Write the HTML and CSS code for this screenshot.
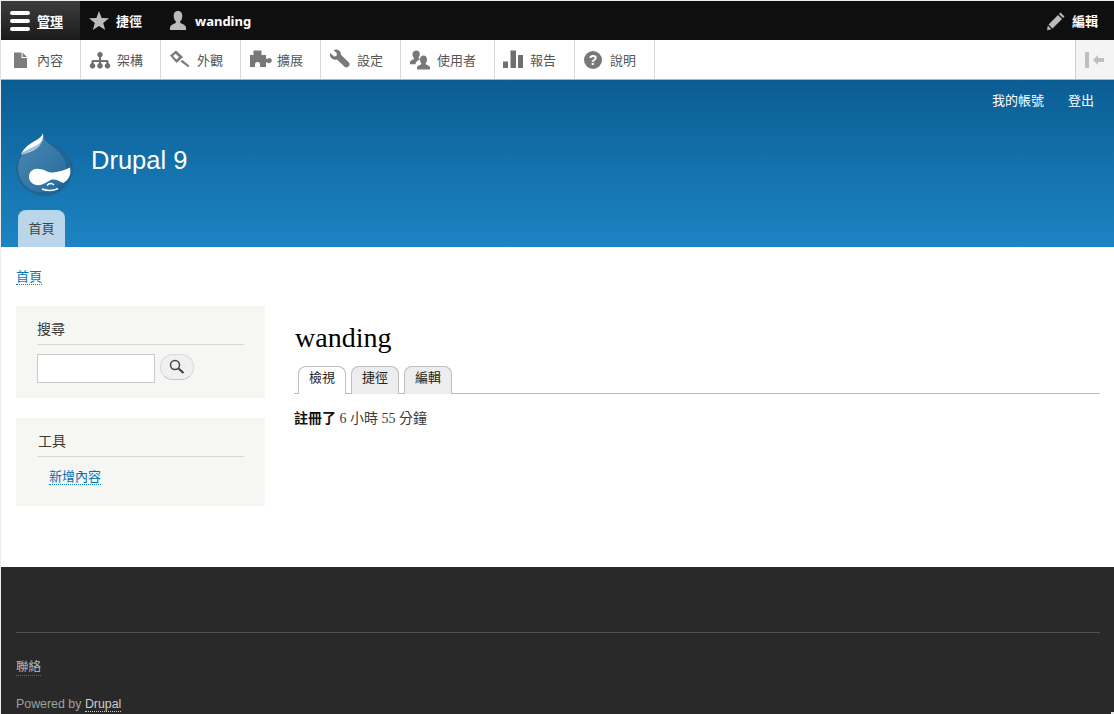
FILE: index.html
```html
<!DOCTYPE html>
<html lang="zh-Hant">
<head>
<meta charset="utf-8">
<title>wanding | Drupal 9</title>
<link rel="stylesheet" href="styles.css">
</head>
<body>
<div class="page">
  <nav class="bar">
    <a class="bar-item bar-item-active"><svg class="bar-icon bar-icon-menu" width="22" height="20" viewBox="0 0 22 20"><rect x="0" y="0" width="20" height="4" rx="2" fill="#fff"/><rect x="0" y="8" width="20" height="4" rx="2" fill="#fff"/><rect x="0" y="16" width="20" height="4" rx="2" fill="#fff"/></svg><span class="under">管理</span></a>
    <a class="bar-item"><svg class="bar-icon bar-icon-star" width="20" height="20" viewBox="0 0 20 20"><path fill="#bbb" d="M10 0l2.6 6.9 7.4.4-5.8 4.6 2 7.1L10 15l-6.200 4 2-7.100L0 7.300l7.400-.4z"/></svg><span>捷徑</span></a>
    <a class="bar-item bar-item-user"><svg class="bar-icon" width="20" height="20" viewBox="0 0 20 20"><path fill="#bbb" d="M10 0c3 0 4.300 2.300 4.300 5 0 2.400-1 4.300-2 5.300-.4.700-.2 1.500.5 1.900 2.500 1.100 5.200 2.300 5.200 4.300V19H2v-2.500c0-2 2.700-3.200 5.200-4.300.7-.4.900-1.200.5-1.900-1-1-2-2.900-2-5.300C5.700 2.300 7 0 10 0z"/></svg><span class="latin">wanding</span></a>
    <a class="bar-item bar-item-edit"><svg class="bar-icon" width="20" height="20" viewBox="0 0 20 20"><path fill="#bbb" d="M14.500 1.500l4 4L17 7l-4-4zM12 4l4 4-9.500 9.500-4-4zM1.800 14.600l3.600 3.600-4.400 1z"/></svg><span>編輯</span></a>
  </nav>

  <nav class="tray">
    <a class="tray-item"><svg class="tray-icon" width="20" height="20" viewBox="0 0 20 20"><path fill="#7d7d7d" d="M4 2.500h7.500V8H17v10H4zM12.500 2.500L17 7h-4.500z"/></svg><span>內容</span></a>
    <a class="tray-item"><svg class="tray-icon" width="20" height="20" viewBox="0 0 20 20"><path fill="#6f6f6f" d="M10 2a2.700 2.700 0 0 1 1.100 5.200V10h6a1.500 1.500 0 0 1 1.500 1.500v1.800a2.800 2.800 0 1 1-2.200 0V12h-5.300v1.300a2.800 2.800 0 1 1-2.200 0V12H3.600v1.300a2.800 2.800 0 1 1-2.200 0v-1.800A1.500 1.500 0 0 1 2.900 10h6V7.200A2.700 2.700 0 0 1 10 2z"/></svg><span>架構</span></a>
    <a class="tray-item"><svg class="tray-icon" width="20" height="20" viewBox="0 0 20 20"><path fill="#7a7a7a" d="M6 .5L13 7l-6.500 6L0 5.500zM5.500 3.800L3 6l3.500 3.500L9 7zM10.500 11.500l1.700-1.700 7.300 6-1.300 1.500z"/></svg><span>外觀</span></a>
    <a class="tray-item"><svg class="tray-icon" width="20" height="20" viewBox="0 0 20 20"><path fill="#787878" d="M0 5h3.500V.5h8V5H16v3.800h1.500a2.500 2.500 0 1 1 0 3.600H16V17h-6v-2.500a2.500 2.500 0 0 0-5 0V17H0z"/></svg><span>擴展</span></a>
    <a class="tray-item"><svg class="tray-icon" width="20" height="20" viewBox="0 0 20 20"><path fill="#787878" d="M6 -.5c2.900 0 5.200 2.400 4.900 5.300l8 7.600c1 1 .9 2.700 0 3.700l-.6.700c-1 1-2.700 1-3.700 0L7 9.600C4 10.400 0 8.400 0 5c0-.7.100-1.300.4-1.900l3.600 3.500 2.400-.6.600-2.400L3.500 0C4.300-.3 5.200-.5 6-.5z"/></svg><span>設定</span></a>
    <a class="tray-item tray-item-wide"><svg class="tray-icon" width="20" height="20" viewBox="0 0 20 20"><path fill="#787878" d="M6.500 0.500c2 0 3.300 1.500 3.300 3.500 0 1.500-.6 2.800-1.500 3.800 1 .4 1.500 .9 1.700 1.400-1.500.8-4.500 2.300-4.500 5H0v-2c0-1.500 2-2.300 3.500-3 .5-.3.600-1 .3-1.500-.8-1-1.300-2.200-1.300-3.700C2.500 2 4.500 0.500 6.500 0.500zM13.500 5.500c2 0 3.500 1.500 3.500 4 0 1.500-.5 2.800-1.300 3.700-.3.500-.2 1.100.3 1.400 1.700.7 4 1.600 4 3v2H7v-2c0-1.400 2.300-2.300 4-3 .5-.3.600-.9.300-1.400C10.500 12.300 10 11 10 9.500c0-2.500 1.500-4 3.500-4z"/></svg><span>使用者</span></a>
    <a class="tray-item tray-item-tight"><svg class="tray-icon" width="20" height="20" viewBox="0 0 20 20"><path fill="#6f6f6f" d="M0 11.500h5V18H0zM7.500 .5h5.500V18H7.500zM15 5h5v13h-5z"/></svg><span>報告</span></a>
    <a class="tray-item tray-item-tight"><svg class="tray-icon" width="20" height="20" viewBox="0 0 20 20"><circle cx="10" cy="10" r="9" fill="#787878"/><text x="10" y="15" class="help-glyph">?</text></svg><span>說明</span></a>
    <div class="tray-spacer"></div>
    <a class="tray-toggle"><svg width="20" height="16" viewBox="0 0 20 16"><rect x="0" y="0" width="4" height="16" fill="#bfbfbf"/><path fill="#bfbfbf" d="M8 8l5-5v3h6v4h-6v3z"/></svg></a>
  </nav>

  <header class="site-header">
    <ul class="secondary-menu">
      <li><a>我的帳號</a></li>
      <li><a>登出</a></li>
    </ul>
    <div class="branding">
      <svg class="logo" width="60" height="68" viewBox="0 0 60 68">
        <defs>
          <linearGradient id="drop" x1="0" y1="0" x2="1" y2="1">
            <stop offset="0" stop-color="#4c88b2"/>
            <stop offset="1" stop-color="#246a9c"/>
          </linearGradient>
        </defs>
        <path fill="#1f6596" d="M28 1C29 8 36 11 43 15 52 21 58 29 58 37 58 53 45 65 30 65 14 65 1 53 1 37 1 27 8 19 15 14 21 10 27 7 28 1z"/>
        <path fill="url(#drop)" d="M28 6C30 11 38 15 44 21 51 28 53 36 50 44 46 56 34 62 22 61 10 58 3 48 3 37 3 27 9 21 16 16 21 13 26 11 28 6z"/>
        <path fill="#fff" d="M28 2C29 8 27 12 21 15 15 18 9 20 6 24 8 18 13 14 18 11 23 8 27 6 28 2z"/>
        <path fill="#a9c6dc" d="M27 10C25 13 21 15 15 18 11 20 8 22 6 24 9 23 13 22 18 20 23 17 26 14 27 10z"/>
        <path fill="#fff" d="M14 46C14 40 19 37 24 38 29 38 33 42 38 41.500 44 41 50 39 55 36.500 56.500 43 54 49 48 52 44 50 41 48 37 48.500 33 49.500 31 53 25 54 19 55 14 51 14 46z"/>
        <path fill="none" stroke="#fff" stroke-width="1.500" d="M27 58c5 2 11 2 16-.5M32 54.500c2-2.500 5-2.500 7-.5"/>
      </svg>
      <a class="site-name">Drupal 9</a>
    </div>
    <ul class="main-menu">
      <li><a class="main-tab">首頁</a></li>
    </ul>
  </header>

  <main class="main">
    <div class="breadcrumb"><a class="link">首頁</a></div>
    <div class="columns">
      <aside class="sidebar">
        <section class="block">
          <h2 class="block-title">搜尋</h2>
          <form class="search">
            <input class="search-input" type="text">
            <button class="search-btn" type="button"><svg width="16" height="16" viewBox="0 0 16 16"><circle cx="6" cy="6" r="4.500" fill="none" stroke="#444" stroke-width="1.500"/><path d="M9.500 9.500l5 4.500" stroke="#444" stroke-width="2.200"/></svg></button>
          </form>
        </section>
        <section class="block block-tools">
          <h2 class="block-title block-title-tools">工具</h2>
          <ul class="block-list"><li><a class="link link-dark">新增內容</a></li></ul>
        </section>
      </aside>
      <article class="content">
        <h1 class="title">wanding</h1>
        <ul class="tabs">
          <li><a class="tab tab-active">檢視</a></li>
          <li><a class="tab">捷徑</a></li>
          <li><a class="tab">編輯</a></li>
        </ul>
        <p class="member"><strong>註冊了</strong> 6 小時 55 分鐘</p>
      </article>
    </div>
  </main>

  <footer class="footer">
    <div class="footer-inner">
      <a class="footer-link">聯絡</a>
      <p class="powered">Powered by <a class="footer-drupal">Drupal</a></p>
    </div>
  </footer>
</div>
<div class="corner"></div>
</body>
</html>
```
FILE: styles.css
```css
* { box-sizing: border-box; }
html, body { margin: 0; padding: 0; height: 100%; background: #ededed; }
body { font-family: "Liberation Sans", "Noto Sans CJK TC", sans-serif; font-size: 14px; overflow: hidden; }
ul { list-style: none; margin: 0; padding: 0; }
.page { margin: 1px 0 0 1px; height: 713px; display: flex; flex-direction: column; background: #fff; }

.bar { height: 39px; background: #0f0f0f; display: flex; align-items: stretch; flex: none; color: #fff; font-family: "Noto Sans", "Noto Sans CJK TC", sans-serif; font-weight: 700; font-size: 13px; }
.bar-item { display: flex; align-items: center; padding: 0 14px 0 9px; color: #fff; }
.bar-icon { margin-right: 6px; flex: none; }
.bar-icon-menu { margin-right: 5px; }
.bar-icon-star { margin-right: 7px; }
.bar-item-active { width: 79px; background: linear-gradient(#3d3d3d, #1b1b1b); padding-right: 0; }
.bar-item-user { padding-left: 12px; }
.bar-item-user .bar-icon { margin-right: 7px; }
.bar-item-edit { margin-left: auto; padding: 0 16px 0 0; }
.under { text-decoration: underline; text-underline-offset: 2px; }
.latin { letter-spacing: 0; }

.tray { height: 40px; flex: none; background: #fff; display: flex; align-items: stretch; border-bottom: 1px solid #b5b5b5; box-shadow: 0 1px 1px rgba(0,0,0,.3); position: relative; font-family: "Noto Sans", "Noto Sans CJK TC", sans-serif; font-size: 13px; color: #565656; }
.tray-item { width: 80px; display: flex; align-items: center; padding-left: 9px; border-right: 1px solid #d9d9d9; flex: none; }
.tray-item-wide { width: 94px; }
.tray-item-tight { padding-left: 8px; }
.tray-icon { margin-right: 7px; flex: none; overflow: visible; }
.help-glyph { fill: #fff; font: 700 14px "Liberation Sans", sans-serif; text-anchor: middle; }
.tray-spacer { flex: 1; }
.tray-toggle { width: 39px; background: #f4f4f4; border-left: 1px solid #cfcfcf; display: flex; align-items: center; justify-content: center; }

.site-header { height: 167px; flex: none; background: linear-gradient(#0a5d93, #1d84c3); display: flex; flex-direction: column; position: relative; color: #fff; }
.secondary-menu { display: flex; justify-content: flex-end; gap: 24px; padding: 12px 20px 0 0; font-size: 13px; line-height: 17px; color: #fff; }
.branding { display: flex; align-items: center; padding: 10px 0 0 14px; height: 101px; flex: none; }
.logo { flex: none; }
.site-name { font-size: 25.5px; margin-left: 16px; margin-top: -8px; color: #fff; }
.main-menu { display: flex; padding: 0 0 0 17px; }
.main-tab { display: block; width: 47px; height: 37px; background: #b9d6ea; border-radius: 8px 8px 0 0; color: #444; font-size: 13px; line-height: 37px; text-align: center; }

.main { flex: 1; display: flex; flex-direction: column; padding: 22px 14px 0 15px; }
.link { color: #0678be; border-bottom: 1px dotted #0678be; }
.link-dark { color: #0071b3; }
.breadcrumb { line-height: 16px; font-size: 13px; height: 37px; }
.columns { display: flex; flex: 1; align-items: flex-start; }
.sidebar { width: 249px; flex: none; display: flex; flex-direction: column; gap: 20px; }
.block { background: #f6f6f2; padding: 13px 21px 0; height: 92px; }
.block-tools { height: 88px; }
.block-title { margin: 0; font-weight: 400; font-size: 14px; line-height: 20px; color: #3b3b3b; padding-bottom: 5px; border-bottom: 1px solid #d6d6d6; }
.block-title-tools { padding-left: 1px; }
.search { display: flex; align-items: flex-start; gap: 5px; margin-top: 9px; }
.search-input { width: 118px; height: 29px; border: 1px solid #c9c9c9; background: #fff; padding: 0; margin: 0; }
.search-btn { width: 34px; height: 26px; border: 1px solid #d8d8d8; border-bottom-color: #c4c4c4; border-radius: 13px; background: #f0f0f0; padding: 0; display: flex; align-items: center; justify-content: center; }
.block-list { padding: 12px 0 0 12px; line-height: 16px; font-size: 13px; }

.content { flex: 1; padding: 15px 0 0 29px; min-width: 0; }
.title { margin: 0 0 0 1px; font: 400 28px/34px "Liberation Serif", "Noto Serif CJK TC", serif; color: #000; }
.tabs { display: flex; gap: 5px; margin-top: 11px; padding-left: 4px; border-bottom: 1px solid #bbb; height: 28px; }
.tab { display: block; height: 28px; padding: 0 10px; background: #ededed; border: 1px solid #bfbfbf; border-bottom: 0; border-radius: 8px 8px 0 0; font-size: 13px; line-height: 22px; color: #222; }
.tab-active { background: #fff; position: relative; }
.member { margin: 16px 0 0; font: 14px/18px "Liberation Serif", "Noto Sans CJK TC", serif; color: #3b3b3b; }
.member strong { color: #111; }

.footer { height: 147px; flex: none; background: #292929; padding: 65px 14px 0 15px; color: #bbb; }
.footer-inner { border-top: 1px solid #4f4f4f; padding-top: 26px; font-size: 12.5px; }
.footer-link { color: #bbb; border-bottom: 1px dotted #666; line-height: 16px; display: inline-block; }
.powered { margin: 20px 0 0; font-size: 12.4px; line-height: 16px; color: #a0a0a0; }
.footer-drupal { color: #ccc; border-bottom: 1px dotted #ccc; }
.corner { position: fixed; right: 0; bottom: 0; width: 3px; height: 2px; background: #e8e8e8; }
```
